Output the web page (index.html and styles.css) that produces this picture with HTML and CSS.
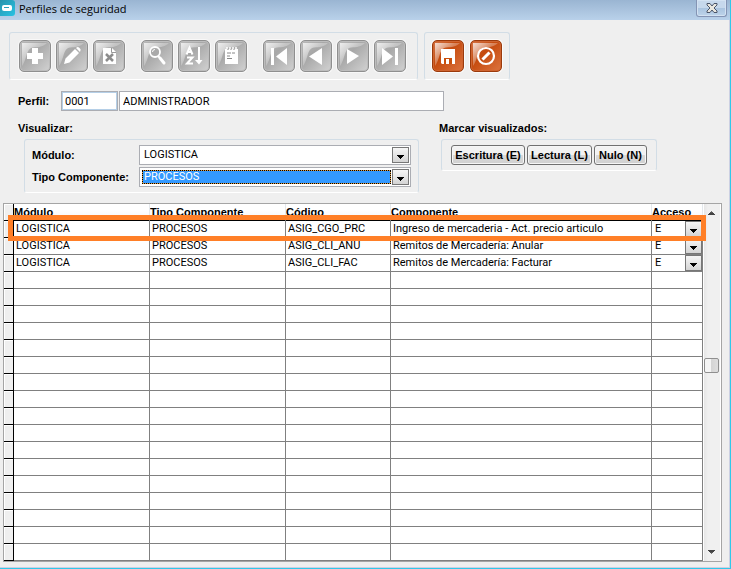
FILE: index.html
```html
<!DOCTYPE html>
<html lang="es">
<head>
<meta charset="utf-8">
<title>Perfiles de seguridad</title>
<link rel="stylesheet" href="styles.css">
</head>
<body>
<svg class="defs" aria-hidden="true">
  <defs>
    <linearGradient id="gloss" x1="0" y1="0" x2="1" y2="1">
      <stop offset="0" stop-color="#fff" stop-opacity=".75"/>
      <stop offset=".6" stop-color="#fff" stop-opacity=".15"/>
    </linearGradient>
    <symbol id="shine" viewBox="0 0 32 32">
      <path d="M3 3H28C24 7 20 7 14 7.500C7 8 8 20 3 26Z" fill="url(#gloss)"/>
    </symbol>
  </defs>
</svg>
<main class="window">
  <header class="titlebar">
    <svg class="app-icon" viewBox="0 0 15 16" aria-hidden="true">
      <defs><linearGradient id="app" x1="0" y1="0" x2="1" y2="1"><stop offset="0" stop-color="#2a8fa8"/><stop offset="1" stop-color="#27c3e4"/></linearGradient></defs>
      <rect x="-2" y="0" width="17" height="16" rx="3" fill="url(#app)"/>
      <rect x="2" y="5" width="10" height="6" rx="2" fill="#fff"/>
      <path d="M4 7h5v1H4z" fill="#2a9fba"/>
    </svg>
    <h1>Perfiles de seguridad</h1>
    <button class="close" type="button" aria-label="Cerrar">
      <svg viewBox="0 0 12 10" aria-hidden="true"><path d="M1 .5h3L6 3 8 .5h3V2L8 5l3 3v1.500H8L6 7 4 9.500H1V8l3-3-3-3z" fill="#e9e7e0" stroke="#4b5569"/></svg>
    </button>
  </header>

  <div class="toolbars">
    <div class="group toolbar">
      <div class="set">
        <button class="tool" type="button" aria-label="Agregar"><svg viewBox="0 0 32 32"><use href="#shine"/><path d="M13 8h6v5h5v6h-5v5h-6v-5H8v-6h5z" fill="#fff"/></svg></button>
        <button class="tool" type="button" aria-label="Editar"><svg viewBox="0 0 32 32"><use href="#shine"/><path d="M8 24l1.500-5.500L19 9l4 4-9.500 9.500zM20 8l1-.8q1-.6 2 .3l1.200 1.200q.9 1 .2 2L24 12z" fill="#fff"/></svg></button>
        <button class="tool" type="button" aria-label="Eliminar"><svg viewBox="0 0 32 32"><use href="#shine"/><path d="M10 8h9l4 4v12H10z" fill="#fff"/><path d="M18.500 8v4.500H23" fill="none" stroke="#999"/><path d="M13 14l7 7m0-7l-7 7" stroke="#8d8d8d" stroke-width="2.500"/></svg></button>
      </div>
      <div class="set">
        <button class="tool" type="button" aria-label="Buscar"><svg viewBox="0 0 32 32"><use href="#shine"/><circle cx="14" cy="12" r="5" fill="#aaa" stroke="#fff" stroke-width="1.800"/><path d="M11.500 12q0-2.500 2.500-2.500" fill="none" stroke="#fff"/><path d="M17 16l2 2" stroke="#fff" stroke-width="2"/><path d="M19 18l4 5" stroke="#fff" stroke-width="3" stroke-linecap="round"/></svg></button>
        <button class="tool" type="button" aria-label="Ordenar"><svg viewBox="0 0 32 32"><use href="#shine"/><path d="M8.500 14.500l3-7 3 7m-5-2.500h4M9 17.500h5.500L9 23.500h6" fill="none" stroke="#fff" stroke-width="2"/><path d="M20 7v13h-3l4 4.500 3.500-4.500H22V7z" fill="#fff"/></svg></button>
        <button class="tool" type="button" aria-label="Notas"><svg viewBox="0 0 32 32"><use href="#shine"/><path d="M10 9h13v15H10z" fill="#fff"/><path d="M12 7v3m3-3v3m3-3v3m3-3v3" stroke="#fff" stroke-width="1.500"/><path d="M12.500 9.500h1m2 0h1m2 0h1M12 13h4m1 0h3M12 16h3M12 18.500h5" stroke="#888"/></svg></button>
      </div>
      <div class="set">
        <button class="tool" type="button" aria-label="Primero"><svg viewBox="0 0 32 32"><use href="#shine"/><path d="M8 8h3v17H8zM24 8v17l-11-8.500z" fill="#fff"/></svg></button>
        <button class="tool" type="button" aria-label="Anterior"><svg viewBox="0 0 32 32"><use href="#shine"/><path d="M22 8v17L9 16.500z" fill="#fff"/></svg></button>
        <button class="tool" type="button" aria-label="Siguiente"><svg viewBox="0 0 32 32"><use href="#shine"/><path d="M10 9v15l12-8z" fill="#fff"/></svg></button>
        <button class="tool" type="button" aria-label="Último"><svg viewBox="0 0 32 32"><use href="#shine"/><path d="M21 8h3v17h-3zM8 8v17l11-8.500z" fill="#fff"/></svg></button>
      </div>
    </div>
    <div class="group toolbar actions">
      <button class="tool orange" type="button" aria-label="Guardar"><svg viewBox="0 0 32 32"><use href="#shine"/><path d="M9 9h14v15H10l-1-1z" fill="#fff"/><path d="M12 18h8v6h-8z" fill="#c9500e"/><path d="M14 19h3v5h-3z" fill="#fff"/></svg></button>
      <button class="tool orange" type="button" aria-label="Cancelar"><svg viewBox="0 0 32 32"><use href="#shine"/><circle cx="16" cy="16" r="8" fill="none" stroke="#fff" stroke-width="2.200"/><path d="M12.500 19.500l7-7" stroke="#fff" stroke-width="3"/></svg></button>
    </div>
  </div>

  <div class="profile">
    <label for="perfil">Perfil:</label>
    <input id="perfil" class="field code" value="0001">
    <input class="field name" aria-label="Nombre del perfil" value="ADMINISTRADOR">
  </div>

  <div class="filters">
    <section class="view">
      <h2>Visualizar:</h2>
      <div class="group filter-grid">
        <label for="modulo">Módulo:</label>
        <span class="combo"><select id="modulo"><option>LOGISTICA</option></select></span>
        <label for="tipo">Tipo Componente:</label>
        <span class="combo selected"><select id="tipo"><option>PROCESOS</option></select></span>
      </div>
    </section>
    <section class="mark">
      <h2>Marcar visualizados:</h2>
      <div class="group mark-buttons">
        <button class="push wide" type="button">Escritura (E)</button>
        <button class="push medium" type="button">Lectura (L)</button>
        <button class="push small" type="button">Nulo (N)</button>
      </div>
    </section>
  </div>

  <div class="grid">
    <table>
      <colgroup><col class="c-sel"><col class="c-mod"><col class="c-tipo"><col class="c-cod"><col><col class="c-acc"></colgroup>
      <thead><tr><th></th><th>Módulo</th><th>Tipo Componente</th><th>Código</th><th>Componente</th><th>Acceso</th></tr></thead>
      <tbody>
        <tr><td></td><td>LOGISTICA</td><td>PROCESOS</td><td>ASIG_CGO_PRC</td><td>Ingreso de mercaderia - Act. precio articulo</td><td><span class="cell-combo"><select aria-label="Acceso ASIG_CGO_PRC"><option>E</option></select></span></td></tr>
        <tr><td></td><td>LOGISTICA</td><td>PROCESOS</td><td>ASIG_CLI_ANU</td><td>Remitos de Mercadería: Anular</td><td><span class="cell-combo"><select aria-label="Acceso ASIG_CLI_ANU"><option>E</option></select></span></td></tr>
        <tr><td></td><td>LOGISTICA</td><td>PROCESOS</td><td>ASIG_CLI_FAC</td><td>Remitos de Mercadería: Facturar</td><td><span class="cell-combo"><select aria-label="Acceso ASIG_CLI_FAC"><option>E</option></select></span></td></tr>
        <tr><td></td><td></td><td></td><td></td><td></td><td></td></tr>
        <tr><td></td><td></td><td></td><td></td><td></td><td></td></tr>
        <tr><td></td><td></td><td></td><td></td><td></td><td></td></tr>
        <tr><td></td><td></td><td></td><td></td><td></td><td></td></tr>
        <tr><td></td><td></td><td></td><td></td><td></td><td></td></tr>
        <tr><td></td><td></td><td></td><td></td><td></td><td></td></tr>
        <tr><td></td><td></td><td></td><td></td><td></td><td></td></tr>
        <tr><td></td><td></td><td></td><td></td><td></td><td></td></tr>
        <tr><td></td><td></td><td></td><td></td><td></td><td></td></tr>
        <tr><td></td><td></td><td></td><td></td><td></td><td></td></tr>
        <tr><td></td><td></td><td></td><td></td><td></td><td></td></tr>
        <tr><td></td><td></td><td></td><td></td><td></td><td></td></tr>
        <tr><td></td><td></td><td></td><td></td><td></td><td></td></tr>
        <tr><td></td><td></td><td></td><td></td><td></td><td></td></tr>
        <tr><td></td><td></td><td></td><td></td><td></td><td></td></tr>
        <tr><td></td><td></td><td></td><td></td><td></td><td></td></tr>
        <tr><td></td><td></td><td></td><td></td><td></td><td></td></tr>
      </tbody>
    </table>
    <div class="scrollbar">
      <button type="button" class="arrow up" aria-label="Subir"></button>
      <div class="space-above"></div>
      <div class="thumb"></div>
      <div class="space-below"></div>
      <button type="button" class="arrow down" aria-label="Bajar"></button>
    </div>
    <div class="highlight"></div>
  </div>
</main>
</body>
</html>
```
FILE: styles.css
```css
*, *::after { box-sizing: border-box; }

body {
  margin: 0;
  background: #efefef;
  color: #000;
  font: 11px/14px Roboto, "Liberation Sans", sans-serif;
}

button, input, select {
  margin: 0;
  padding: 0;
  font: inherit;
  color: inherit;
}

h1, h2 { margin: 0; font-size: inherit; }
label, h2, th, .push {
  font-family: "Liberation Sans", Arial, sans-serif;
  font-weight: bold;
}

.defs { position: absolute; width: 0; height: 0; }

.window {
  min-height: 100vh;
  padding-bottom: 5px;
  border-right: 1px solid #2fc9ea;
  border-bottom: 1px solid #2fc9ea;
  box-shadow: inset -1px -1px #cdd0e2;
}

/* Title bar */
.titlebar {
  display: flex;
  align-items: flex-start;
  height: 20px;
  background: linear-gradient(#9ab5d2, #b9d1ea);
}
.app-icon { width: 15px; height: 16px; }
.titlebar h1 {
  flex: 1;
  padding-left: 4px;
  font: 11px/18px "Open Sans", "Noto Sans", sans-serif;
}
.close {
  display: flex;
  align-items: center;
  justify-content: center;
  width: 31px;
  height: 17px;
  margin-right: 3px;
  border: 1px solid #8494b4;
  border-top: 0;
  border-radius: 0 0 3px 3px;
  background: linear-gradient(#c6d8ec 50%, #a9c3df 50%, #bed4ea);
  box-shadow: inset 0 0 0 1px #d3e2f2;
}
.close svg { width: 12px; height: 10px; }

/* Framed groups */
.group {
  border: 1px solid #d2dde6;
  border-bottom-color: #fff;
  border-radius: 3px;
}

/* Toolbars */
.toolbars {
  display: flex;
  gap: 6px;
  padding: 12px 9px 0;
}
.toolbar {
  display: flex;
  gap: 16px;
  height: 48px;
  padding: 7px 11px 7px 9px;
}
.toolbar.actions { gap: 6px; padding: 7px; }
.set { display: flex; gap: 5px; }
.tool {
  width: 32px;
  height: 32px;
  border: 1px solid #8f8f8f;
  border-radius: 5px;
  background: linear-gradient(135deg, #b9b9b9, #a8a8a8 40%, #d2d2d2);
  box-shadow: inset 0 0 0 1px #bdbdbd, 0 0 0 1px #f8f8f8;
}
.tool svg { display: block; width: 32px; height: 32px; margin: -1px; }
.tool.orange {
  border-color: #9b3a0c;
  background: linear-gradient(135deg, #d4774a, #c54a0d 40%, #dc7440);
  box-shadow: inset 0 0 0 1px #cf6430, 0 0 0 1px #fbfbfb;
}

/* Profile */
.profile {
  display: flex;
  align-items: center;
  padding: 11px 18px 0;
}
.profile label { width: 43px; }
.field {
  height: 20px;
  padding: 0 3px;
  border: 1px solid #abadb3;
  background: #fff;
}
.code {
  width: 57px;
  margin-right: 1px;
  box-shadow: inset 0 0 0 1px #b5cfe7;
}
.name { width: 325px; }

/* Filters */
.filters {
  display: flex;
  gap: 20px;
  padding: 10px 18px 0;
}
.view { width: 401px; }
.view .group { margin-left: 6px; }
.mark .group { margin-left: 2px; }
.filters h2 { margin-bottom: 4px; }
.filter-grid {
  display: grid;
  grid-template-columns: 107px 1fr;
  align-items: center;
  row-gap: 2px;
  padding: 5px 7px;
}
.combo {
  display: flex;
  height: 20px;
  padding: 1px;
  border: 1px solid #abadb3;
  background: #fff;
}
.combo select, .cell-combo select {
  flex: 1;
  min-width: 0;
  border: 0;
  border-radius: 0;
  appearance: none;
  background: none;
}
.combo select { padding-left: 3px; }
.combo.selected select {
  margin: 1px;
  padding-left: 2px;
  outline: 1px dotted #000;
  outline-offset: -1px;
  background: #3399ff;
  box-shadow: inset 0 0 0 1px #e39a3c;
  color: #fff;
}
.combo::after, .cell-combo::after {
  content: "";
  flex: none;
  width: 17px;
  border: 1px solid #777;
  background:
    linear-gradient(#000, #000) center 7px / 7px 1px no-repeat,
    linear-gradient(#000, #000) center 8px / 5px 1px no-repeat,
    linear-gradient(#000, #000) center 9px / 3px 1px no-repeat,
    linear-gradient(#000, #000) center 10px / 1px 1px no-repeat,
    linear-gradient(#f6f6f6, #d4d4d4);
}

.mark-buttons {
  display: flex;
  gap: 2px;
  padding: 5px 9px;
}
.push {
  height: 20px;
  border: 1px solid #707070;
  border-radius: 3px;
  background: linear-gradient(#f2f2f2 50%, #dadada 50%, #d0d0d0);
  box-shadow: inset 0 0 0 1px #f6f6f6;
}
.wide { width: 74px; }
.medium { width: 65px; }
.small { width: 53px; }

/* Data grid */
.grid {
  position: relative;
  display: flex;
  margin: 10px 8px 0 3px;
  border: 1px solid #a5a5a5;
  background: #fff;
}
table {
  flex: 1;
  width: 0;
  table-layout: fixed;
  border-spacing: 0;
}
.c-sel { width: 10px; }
.c-mod { width: 136px; }
.c-tipo { width: 136px; }
.c-cod { width: 105px; }
.c-acc { width: 51px; }
th, td {
  height: 17px;
  padding: 0 0 0 2px;
  border-right: 1px solid #808080;
  border-bottom: 1px solid #808080;
  line-height: 16px;
  text-align: left;
  white-space: nowrap;
  overflow: hidden;
}
th {
  padding-left: 0;
  border-right-color: #e4e8ec;
  border-bottom-color: #000;
  background: linear-gradient(#fff 40%, #f3f6f9);
}
th:first-child, td:first-child {
  padding: 0;
  border-color: #000;
  background: #efefef;
  box-shadow: inset 1px 1px #fff;
}
td:last-child { padding-left: 3px; }
.cell-combo { display: flex; height: 16px; }
.cell-combo select { height: 16px; }

.scrollbar {
  display: flex;
  flex-direction: column;
  width: 18px;
  padding: 0 1px;
  border-right: 1px solid #fff;
  background: linear-gradient(90deg, #fff 1px, #e6e6e6 1px, #f0f0f0 5px, #f0f0f0);
}
.arrow {
  height: 17px;
  border: 0;
  background:
    linear-gradient(#777, #777) center 7px / 1px 1px no-repeat,
    linear-gradient(#555, #555) center 8px / 3px 1px no-repeat,
    linear-gradient(#444, #444) center 9px / 5px 1px no-repeat,
    linear-gradient(#444, #444) center 10px / 7px 1px no-repeat;
}
.down { transform: rotate(180deg); }
.space-above { flex: 137; }
.space-below { flex: 171; }
.thumb {
  height: 15px;
  border: 1px solid #8f8f8f;
  border-radius: 2px;
  background: linear-gradient(90deg, #f5f5f5 45%, #d5d5d5 50%, #dedede);
}

.highlight {
  position: absolute;
  top: 11px;
  left: 4px;
  right: 15px;
  height: 26px;
  border: 5px solid #ff7f27;
  pointer-events: none;
}
```
